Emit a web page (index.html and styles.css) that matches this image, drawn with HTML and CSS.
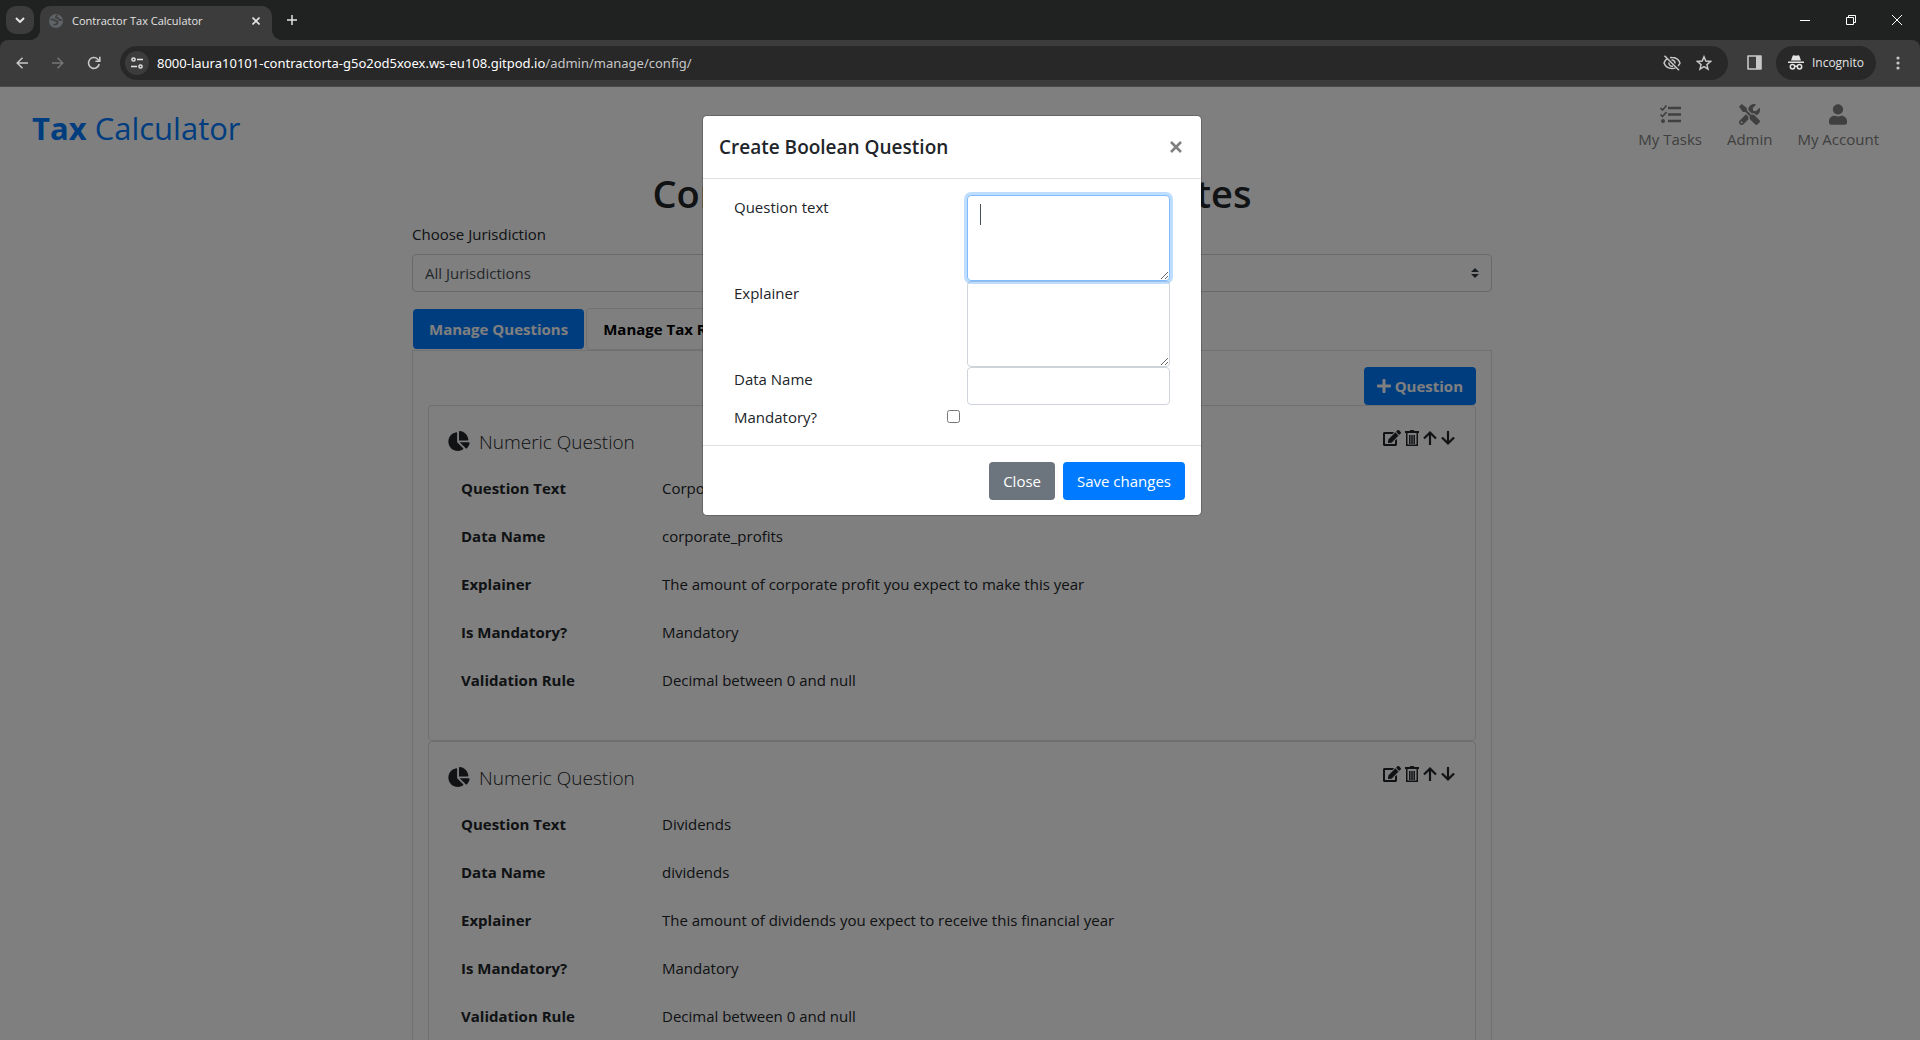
FILE: index.html
```html
<!DOCTYPE html>
<html lang="en">
<head>
<meta charset="utf-8">
<title>Contractor Tax Calculator</title>
<meta name="viewport" content="width=device-width, initial-scale=1">
<link rel="stylesheet" href="styles.css">
</head>
<body>
<svg class="sprite" aria-hidden="true">
  <symbol id="pie" viewBox="0 0 544 512"><path d="M527.79 288H290.5l158.03 158.03c6.04 6.04 15.98 6.53 22.19.68 38.7-36.46 65.32-85.61 73.13-140.86 1.34-9.46-6.51-17.85-16.06-17.85zm-15.83-64.8C503.72 103.74 408.26 8.28 288.8.04 279.68-.59 272 7.1 272 16.24V240h223.77c9.14 0 16.82-7.68 16.19-16.8zM224 288V50.71c0-9.55-8.39-17.4-17.84-16.06C86.99 51.49-4.1 155.6.14 280.37 4.5 408.51 114.83 513.59 243.03 511.98c50.4-.63 96.97-16.87 135.26-44.03 7.9-5.6 8.42-17.23 1.57-24.08L224 288z"/></symbol>
  <symbol id="edit" viewBox="0 0 576 512"><path d="M402.6 83.2l90.2 90.2c3.8 3.8 3.8 10 0 13.8L274.4 405.6l-92.8 10.3c-12.4 1.4-22.9-9.1-21.5-21.5l10.3-92.8L388.8 83.2c3.8-3.8 10-3.8 13.8 0zm162-22.9l-48.8-48.8c-15.2-15.2-39.9-15.2-55.2 0l-35.4 35.4c-3.8 3.8-3.8 10 0 13.8l90.2 90.2c3.8 3.8 10 3.8 13.8 0l35.4-35.4c15.2-15.3 15.2-40 0-55.2zM384 346.2V448H64V128h229.8c3.2 0 6.2-1.3 8.5-3.5l40-40c7.6-7.6 2.2-20.5-8.5-20.5H48C21.5 64 0 85.5 0 112v352c0 26.5 21.5 48 48 48h352c26.5 0 48-21.5 48-48V306.2c0-10.7-12.9-16-20.5-8.5l-40 40c-2.2 2.3-3.5 5.3-3.5 8.5z"/></symbol>
  <symbol id="trash" viewBox="0 0 14 16"><path d="M0 1h4.500L5.500 0h3L9.500 1H14v2H0z"/><path d="M1.750 3v12.250h10.500V3M4.800 5v9M7 5v9M9.200 5v9" fill="none" stroke="currentColor" stroke-width="1.500"/></symbol>
  <symbol id="up" viewBox="0 0 14 16"><path d="M7 15V2.500M1 8.500l6-6 6 6" fill="none" stroke="currentColor" stroke-width="2.200"/></symbol>
  <symbol id="down" viewBox="0 0 14 16"><path d="M7 1v12.500M1 7.500l6 6 6-6" fill="none" stroke="currentColor" stroke-width="2.200"/></symbol>
</svg>

<header class="browser">
  <div class="tab-strip">
    <button class="tab-search" aria-label="Search tabs"><svg width="10" height="6" viewBox="0 0 10 6"><path d="M1 1l4 4 4-4" fill="none" stroke="currentColor" stroke-width="2"/></svg></button>
    <div class="browser-tab">
      <svg class="globe" width="14" height="14" viewBox="0 0 14 14"><circle cx="7" cy="7" r="7" fill="#5f6368"/><path d="M1.500 5.500h3L6.500 7h2v2L7 10.500H4.500M8.500 1 7 2.500v1.500h2L10.500 6H13" fill="none" stroke="#3c3c3c" stroke-width="1.500"/></svg>
      <span class="tab-title">Contractor Tax Calculator</span>
      <button class="plain" aria-label="Close tab"><svg width="8" height="8" viewBox="0 0 8 8"><path d="M.5.5l7 7M7.500.5l-7 7" stroke="currentColor" stroke-width="1.600"/></svg></button>
    </div>
    <button class="plain new-tab" aria-label="New tab"><svg width="10" height="10" viewBox="0 0 10 10"><path d="M5 0v10M0 5h10" stroke="currentColor" stroke-width="1.500"/></svg></button>
    <div class="window-controls">
      <button class="plain" aria-label="Minimise"><svg width="10" height="10" viewBox="0 0 10 10"><path d="M0 5.500h10" stroke="currentColor"/></svg></button>
      <button class="plain" aria-label="Restore"><svg width="10" height="10" viewBox="0 0 10 10"><path d="M.5 2.500h7v7h-7zM2.500 2.500v-2h7v7h-2" fill="none" stroke="currentColor"/></svg></button>
      <button class="plain" aria-label="Close window"><svg width="10" height="10" viewBox="0 0 10 10"><path d="M0 0l10 10M10 0L0 10" stroke="currentColor"/></svg></button>
    </div>
  </div>
  <div class="toolbar">
    <button class="plain tool" aria-label="Back"><svg width="12" height="12" viewBox="0 0 12 12"><path d="M12 6H1.500M6.500.7 1.200 6l5.300 5.300" fill="none" stroke="currentColor" stroke-width="1.500"/></svg></button>
    <button class="plain tool dim" aria-label="Forward"><svg width="12" height="12" viewBox="0 0 12 12"><path d="M0 6h10.500M5.500.7 10.800 6l-5.300 5.300" fill="none" stroke="currentColor" stroke-width="1.500"/></svg></button>
    <button class="plain tool" aria-label="Reload"><svg width="14" height="14" viewBox="0 0 14 14"><path d="M12.200 8A5.400 5.400 0 1 1 10.800 3.200L12.500 5M12.800.8V5.200H8.400" fill="none" stroke="currentColor" stroke-width="1.600"/></svg></button>
    <div class="address">
      <button class="site-info" aria-label="Site information"><svg width="12" height="12" viewBox="0 0 12 12"><g fill="none" stroke="currentColor" stroke-width="1.500"><circle cx="2.500" cy="2.500" r="1.600"/><path d="M6 2.500h6M0 9.500h6"/><circle cx="9.500" cy="9.500" r="1.600"/></g></svg></button>
      <span class="url">8000-laura10101-contractorta-g5o2od5xoex.ws-eu108.gitpod.io<span class="path">/admin/manage/config/</span></span>
      <button class="plain" aria-label="Third-party cookies blocked"><svg width="18" height="16" viewBox="0 0 18 16"><g fill="none" stroke="currentColor" stroke-width="1.500"><path d="M4.500 3.300C3 4.300 1.700 6 1 8c1.300 3.300 4.300 5.500 8 5.500 1.200 0 2.400-.2 3.400-.7M7 2.700A8 8 0 0 1 9 2.500c3.700 0 6.700 2.200 8 5.500-.4 1.100-1.100 2.100-2 2.900"/><path d="M6 7.500A3 3 0 0 0 10 11M8.500 5.100A3 3 0 0 1 12 8.500M1.500.8l14.500 14.500"/></g></svg></button>
      <button class="plain star" aria-label="Bookmark"><svg width="16" height="16" viewBox="0 0 16 16"><path d="M8 1.800l1.800 4.300 4.700.4-3.600 3.100 1.100 4.600L8 11.700l-4 2.500 1.100-4.600L1.500 6.500l4.700-.4z" fill="none" stroke="currentColor" stroke-width="1.500"/></svg></button>
    </div>
    <button class="plain panel-icon" aria-label="Side panel"><svg width="15" height="15" viewBox="0 0 15 15"><path d="M1 1h13v13H1z" fill="none" stroke="currentColor" stroke-width="1.600" stroke-linejoin="round"/><path d="M9 1h5v13H9z" fill="currentColor"/></svg></button>
    <button class="incognito"><svg width="16" height="15" viewBox="0 0 16 15"><path d="M3 5.500 4.700.8Q5 0 5.800.2L8 .8l2.200-.6Q11 0 11.300.8L13 5.500zM0 6.500h16V8H0z" fill="currentColor"/><g fill="none" stroke="currentColor" stroke-width="1.500"><circle cx="4.500" cy="11.800" r="2.200"/><circle cx="11.500" cy="11.800" r="2.200"/><path d="M6.500 11.500q1.500-.8 3 0"/></g></svg>Incognito</button>
    <button class="plain kebab" aria-label="Menu"><svg width="4" height="14" viewBox="0 0 4 14" fill="currentColor"><circle cx="2" cy="2" r="1.600"/><circle cx="2" cy="7" r="1.600"/><circle cx="2" cy="12" r="1.600"/></svg></button>
  </div>
</header>

<div class="viewport">
  <div class="page">
    <nav class="site-nav">
      <a class="brand" href="#"><strong>Tax</strong> Calculator</a>
      <div class="nav-links">
        <a href="#"><svg width="21" height="21" viewBox="0 0 21 21"><path d="M8 4h13M8 10.500h13M8 17h13" stroke="currentColor" stroke-width="2.600"/><path d="M.5 4l2 2L6.500 1.500M.5 10.500l2 2L6.500 8" fill="none" stroke="currentColor" stroke-width="1.700"/><circle cx="3" cy="17" r="2" fill="currentColor"/></svg>My Tasks</a>
        <a href="#"><svg width="21" height="21" viewBox="0 0 512 512" fill="currentColor"><path d="M501.1 395.7L384 278.6c-23.1-23.1-57.6-27.6-85.4-13.9L192 158.1V96L64 0 0 64l96 128h62.1l106.6 106.6c-13.6 27.8-9.2 62.3 13.9 85.4l117.1 117.1c14.600 14.600 38.200 14.600 52.700 0l52.700-52.700c14.500-14.600 14.500-38.200 0-52.700zM331.700 225c28.300 0 54.900 11 74.900 31l19.400 19.400c15.800-6.900 30.800-16.500 43.800-29.500 37.100-37.100 49.700-89.300 37.900-136.700-2.200-9-13.500-12.100-20.100-5.500l-74.400 74.400-67.900-11.300L334 98.900l74.400-74.400c6.600-6.600 3.400-17.900-5.700-20.200-47.400-11.700-99.600.9-136.600 37.900-28.500 28.500-41.900 66.100-41.200 103.600l82.100 82.100c8.100-1.900 16.500-2.900 24.700-2.900zm-103.900 82l-56.700-56.700L18.700 402.800c-25 25-25 65.500 0 90.500s65.500 25 90.500 0l123.600-123.600c-7.600-19.900-9.900-41.600-5-62.700zM64 472c-13.200 0-24-10.800-24-24 0-13.300 10.700-24 24-24s24 10.700 24 24c0 13.200-10.700 24-24 24z"/></svg>Admin</a>
        <a href="#"><svg width="18" height="21" viewBox="0 0 448 512" fill="currentColor"><path d="M224 256c70.700 0 128-57.300 128-128S294.700 0 224 0 96 57.300 96 128s57.300 128 128 128zm89.600 32h-16.700c-22.200 10.200-46.900 16-72.900 16s-50.600-5.800-72.900-16h-16.700C60.200 288 0 348.200 0 422.400V464c0 26.500 21.500 48 48 48h352c26.500 0 48-21.500 48-48v-41.600c0-74.200-60.200-134.400-134.400-134.400z"/></svg>My Account</a>
      </div>
    </nav>

    <main class="container">
      <h1>Configure Questions &amp; Tax Rates</h1>
      <label class="select-label" for="jurisdiction">Choose Jurisdiction</label>
      <div class="select-wrap">
        <select id="jurisdiction"><option>All Jurisdictions</option></select>
        <svg class="select-arrows" width="8" height="10" viewBox="0 0 4 5"><path fill="#343a40" d="M2 0L0 2h4zm0 5L0 3h4z"/></svg>
      </div>
      <div class="tabs" role="tablist">
        <button class="tab active" role="tab" aria-selected="true">Manage Questions</button>
        <button class="tab" role="tab" aria-selected="false">Manage Tax Rates</button>
      </div>
      <section class="panel">
        <div class="panel-actions">
          <button class="btn btn-primary add"><svg width="14" height="16" viewBox="0 0 448 512" fill="currentColor"><path d="M416 208H272V64c0-17.670-14.330-32-32-32h-32c-17.670 0-32 14.330-32 32v144H32c-17.670 0-32 14.330-32 32v32c0 17.670 14.330 32 32 32h144v144c0 17.670 14.330 32 32 32h32c17.670 0 32-14.330 32-32V304h144c17.670 0 32-14.330 32-32v-32c0-17.670-14.330-32-32-32z"/></svg>Question</button>
        </div>
        <article class="card">
          <header class="card-head">
            <svg class="pie"><use href="#pie"/></svg>
            <h2>Numeric Question</h2>
            <div class="card-tools">
              <button class="plain" aria-label="Edit"><svg width="18" height="16"><use href="#edit"/></svg></button>
              <button class="plain" aria-label="Delete"><svg width="14" height="16"><use href="#trash"/></svg></button>
              <button class="plain" aria-label="Move up"><svg width="14" height="16"><use href="#up"/></svg></button>
              <button class="plain" aria-label="Move down"><svg width="14" height="16"><use href="#down"/></svg></button>
            </div>
          </header>
          <dl class="fields">
            <dt>Question Text</dt><dd>Corporate Profits</dd>
            <dt>Data Name</dt><dd>corporate_profits</dd>
            <dt>Explainer</dt><dd>The amount of corporate profit you expect to make this year</dd>
            <dt>Is Mandatory?</dt><dd>Mandatory</dd>
            <dt>Validation Rule</dt><dd>Decimal between 0 and null</dd>
          </dl>
        </article>
        <article class="card">
          <header class="card-head">
            <svg class="pie"><use href="#pie"/></svg>
            <h2>Numeric Question</h2>
            <div class="card-tools">
              <button class="plain" aria-label="Edit"><svg width="18" height="16"><use href="#edit"/></svg></button>
              <button class="plain" aria-label="Delete"><svg width="14" height="16"><use href="#trash"/></svg></button>
              <button class="plain" aria-label="Move up"><svg width="14" height="16"><use href="#up"/></svg></button>
              <button class="plain" aria-label="Move down"><svg width="14" height="16"><use href="#down"/></svg></button>
            </div>
          </header>
          <dl class="fields">
            <dt>Question Text</dt><dd>Dividends</dd>
            <dt>Data Name</dt><dd>dividends</dd>
            <dt>Explainer</dt><dd>The amount of dividends you expect to receive this financial year</dd>
            <dt>Is Mandatory?</dt><dd>Mandatory</dd>
            <dt>Validation Rule</dt><dd>Decimal between 0 and null</dd>
          </dl>
        </article>
      </section>
    </main>
  </div>

  <div class="backdrop">
    <form class="modal" role="dialog" aria-labelledby="modal-title">
      <header class="modal-head">
        <h2 id="modal-title">Create Boolean Question</h2>
        <button type="button" class="plain modal-x" aria-label="Close"><svg width="12" height="12" viewBox="0 0 12 12"><path d="M1 1l10 10M11 1L1 11" stroke="currentColor" stroke-width="2.600"/></svg></button>
      </header>
      <div class="modal-body">
        <label for="q-text">Question text</label><textarea id="q-text" class="control" autofocus></textarea>
        <label for="q-explainer">Explainer</label><textarea id="q-explainer" class="control"></textarea>
        <label for="q-name">Data Name</label><input id="q-name" class="control" type="text">
        <label for="q-mandatory">Mandatory?</label><input id="q-mandatory" class="check" type="checkbox">
      </div>
      <footer class="modal-foot">
        <button type="button" class="btn btn-secondary">Close</button>
        <button type="button" class="btn btn-primary">Save changes</button>
      </footer>
    </form>
  </div>
</div>
</body>
</html>
```
FILE: styles.css
```css
* { box-sizing: border-box; }

body {
  margin: 0;
  height: 100vh;
  display: flex;
  flex-direction: column;
  overflow: hidden;
  font: 400 15px/24px "Open Sans", "Noto Sans", sans-serif;
  color: #212529;
  background: #fff;
}

h1, h2, dl, dd { margin: 0; }
button, input, select, textarea { font: inherit; color: inherit; }
svg { display: block; flex: none; }
.sprite { position: absolute; width: 0; height: 0; }
.plain { border: 0; padding: 0; background: none; }

/* Browser window */
.browser { flex: none; color: #e3e3e3; background: #202221; font-size: 12px; }
.browser button { display: flex; align-items: center; justify-content: center; }
.tab-strip { display: flex; align-items: center; height: 40px; padding: 6px 0 0 6px; }
.tab-search {
  width: 28px; height: 28px; margin-bottom: 6px;
  border: 0; padding: 0; border-radius: 10px; background: #3c3c3c;
}
.browser-tab {
  display: flex; align-items: center; gap: 9px;
  position: relative;
  width: 232px; height: 34px; margin-left: 6px; padding: 0 12px 4px 9px;
  border-radius: 10px 10px 0 0; background: #3c3c3c;
}
.browser-tab::before, .browser-tab::after {
  content: ""; position: absolute; bottom: 0; width: 10px; height: 10px;
}
.browser-tab::before { right: 100%; background: radial-gradient(circle at 0 0, transparent 10px, #3c3c3c 10px); }
.browser-tab::after { left: 100%; background: radial-gradient(circle at 100% 0, transparent 10px, #3c3c3c 10px); }
.tab-title { flex: 1; white-space: nowrap; font-size: 11px; }
.new-tab { margin: 0 0 6px 15px; }
.window-controls { display: flex; margin: 0 0 6px auto; color: #fff; }
.window-controls button { width: 46px; height: 28px; }
.toolbar {
  display: flex; align-items: center;
  height: 47px; padding: 6px 0 7px 4px;
  border-radius: 8px 8px 0 0; border-bottom: 1px solid #4a4a4a; background: #3c3c3c;
}
.tool { width: 36px; color: #c7c7c7; }
.dim { color: #757575; }
.address {
  flex: 1; display: flex; align-items: center;
  height: 34px; margin-left: 8px; padding: 0 16px 0 5px;
  border-radius: 17px; background: #282828; color: #c7c7c7;
}
.site-info { width: 24px; height: 24px; border: 0; padding: 0; border-radius: 50%; background: #3c3c3c; color: #e3e3e3; }
.url { flex: 1; margin-left: 8px; font-family: "Noto Sans", sans-serif; font-size: 13px; color: #fff; white-space: nowrap; }
.path { color: #c7c7c7; }
.star { margin-left: 15px; }
.panel-icon { margin-left: 19px; color: #c7c7c7; }
.incognito {
  gap: 8px; height: 34px; margin-left: 14px; padding: 0 12px;
  border: 0; border-radius: 17px; background: #282828; color: #e3e3e3;
}
.kebab { width: 44px; color: #c7c7c7; }

/* Site */
.viewport { flex: 1; position: relative; min-height: 0; overflow: hidden; }
.page { padding-right: 16px; }
.site-nav { display: flex; justify-content: space-between; padding: 17px 25px 0 32px; height: 82px; }
.brand { font-size: 31px; line-height: 48px; font-weight: 400; color: #007bff; text-decoration: none; }
.brand strong { font-weight: 700; }
.nav-links { display: flex; gap: 25px; }
.nav-links a {
  display: flex; flex-direction: column; align-items: center; gap: 2px;
  color: #808080; text-decoration: none;
}
.container { max-width: 1080px; margin: 0 auto; }
h1 { font-size: 38px; line-height: 48px; font-weight: 600; text-align: center; }
.select-label { display: block; margin: 5px 0 8px; }
.select-wrap { position: relative; }
select {
  display: block; width: 100%; height: 38px; padding: 0 12px;
  appearance: none; border: 1px solid #ced4da; border-radius: 4px; background: #fff; color: #495057;
}
.select-arrows { position: absolute; right: 13px; top: 14px; }
.tabs { display: flex; gap: 2px; margin-top: 16px; padding-left: 1px; }
.tab {
  height: 42px; padding: 0 16px;
  border: 1px solid #dee2e6; border-radius: 4px; background: none;
  font-weight: 700; color: #000; white-space: nowrap;
}
.tab.active { height: 40px; margin-top: 1px; border: 0; background: #007bff; color: #fff; }
.panel { padding: 16px 15px; border: 1px solid #dee2e6; }
.panel-actions { display: flex; justify-content: flex-end; }
.btn {
  height: 38px; padding: 0 14px; border: 0; border-radius: 4px;
  color: #fff; white-space: nowrap;
}
.btn-primary { background: #007bff; }
.btn-secondary { background: #6c757d; }
.add { display: flex; align-items: center; gap: 4px; padding: 0 13px; font-weight: 700; }
.card { padding: 24px 20px 36px 19px; border: 1px solid #dfdfdf; border-radius: 4px; }
.card-head { display: flex; align-items: flex-start; height: 34px; }
.pie { width: 22px; height: 20px; margin-top: 1px; fill: currentColor; }
.card-head h2 { flex: 1; margin-left: 9px; font-size: 19px; line-height: 24px; font-weight: 300; }
.card-tools { display: flex; gap: 4px; fill: currentColor; }
.fields { display: grid; grid-template-columns: 201px 1fr; margin-left: 13px; }
.fields dt, .fields dd { line-height: 48px; }
.fields dt { font-weight: 700; }

/* Dialog */
.backdrop {
  position: absolute; inset: 0;
  display: flex; align-items: flex-start; justify-content: center;
  padding: 28px 16px 0 0; background: rgba(0, 0, 0, .5);
}
.modal { width: 500px; border: 1px solid rgba(0, 0, 0, .2); border-radius: 5px; background: #fff; background-clip: padding-box; }
.modal-head {
  display: flex; align-items: center; justify-content: space-between;
  height: 63px; padding: 0 19px 0 16px; border-bottom: 1px solid #dee2e6;
}
.modal-head h2 { font-size: 19px; line-height: 30px; font-weight: 600; }
.modal-x { color: #808080; }
.modal-body { display: grid; grid-template-columns: 1fr 203px; padding: 16px 31px; }
.control {
  display: block; width: 100%; height: 38px; padding: 6px 12px;
  border: 1px solid #ced4da; border-radius: 4px; background: #fff; color: #495057;
}
textarea.control { height: 86px; resize: vertical; }
.control:focus { position: relative; outline: 0; border-color: #80bdff; box-shadow: 0 0 0 3px rgba(0, 123, 255, .25); }
textarea.control:focus {
  caret-color: transparent;
  background: linear-gradient(#495057, #495057) 12px 8px / 1px 21px no-repeat #fff;
}
.check { width: 13px; height: 13px; margin: 5px 0 0 -20px; }
.modal-foot { display: flex; justify-content: flex-end; gap: 8px; padding: 16px 16px 15px; border-top: 1px solid #dee2e6; }
```
